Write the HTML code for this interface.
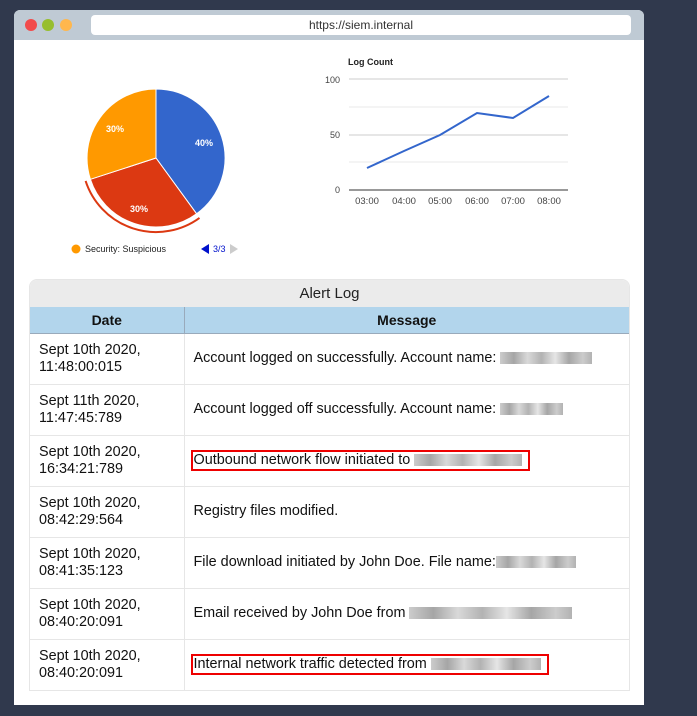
<!DOCTYPE html>
<html><head><meta charset="utf-8"><style>
*{margin:0;padding:0;box-sizing:border-box}
body{width:697px;height:716px;background:#30394d;font-family:"Liberation Sans",sans-serif;position:relative;overflow:hidden}
.win{position:absolute;left:14px;top:10px;width:630px;height:695px;background:#fff;border-radius:6px 6px 0 0;overflow:hidden}
.bar{position:absolute;left:0;top:0;width:630px;height:30px;background:#bfcad4}
.dot{position:absolute;top:9px;width:12px;height:12px;border-radius:50%}
.url{position:absolute;left:77px;top:5px;width:540px;height:20px;background:#fff;border-radius:4px;text-align:center;font-size:12px;line-height:20px;color:#333}
.tbl{position:absolute;left:15px;top:269px;width:601px;border:1px solid #e6e6e6;border-radius:8px 8px 0 0;overflow:hidden}
.ttl{height:27px;background:#ebebeb;text-align:center;font-size:15px;line-height:28px;color:#222}
table{border-collapse:collapse;width:100%;font-size:14.4px;color:#111}
th{background:#b2d5ec;height:26px;font-size:14px;border-bottom:1px solid #9ab;font-weight:bold}
th:first-child{width:154px;border-right:1px solid #9ab}
td{height:51px;border-top:1px solid #e6e6e6;vertical-align:middle;line-height:17px}
td:first-child{padding-left:9px;border-right:1px solid #e6e6e6}
td:last-child{padding-left:9px}
.b{display:inline-block;height:12px;vertical-align:middle;background:linear-gradient(90deg,#bbb,#888 15%,#ccc 30%,#999 45%,#ddd 60%,#888 75%,#bbb 90%,#999);opacity:.75}
.box{display:inline-block;border:2px solid #e00;padding:0 6px 0 1px;margin-left:-3px;line-height:17px}
</style></head><body>
<div class="win">
<div class="bar"><div class="dot" style="left:11px;background:#f24b4b"></div><div class="dot" style="left:28px;background:#97be2e"></div><div class="dot" style="left:46px;background:#ffb74d"></div><div class="url">https://siem.internal</div></div>
<svg style="position:absolute;left:0;top:0" width="630" height="265" viewBox="14 10 630 265">
<path d="M156,158 L156,89 A69,69 0 0 1 196.6,213.8 Z" fill="#3366cc" stroke="#fff" stroke-width="1"/>
<path d="M156,158 L196.6,213.8 A69,69 0 0 1 90.4,179.3 Z" fill="#dc3912" stroke="#fff" stroke-width="1"/>
<path d="M156,158 L90.4,179.3 A69,69 0 0 1 156,89 Z" fill="#ff9900" stroke="#fff" stroke-width="1"/>
<path d="M199.5,217.9 A74,74 0 0 1 85.6,180.9" fill="none" stroke="#dc3912" stroke-width="2"/>
<g font-size="9" fill="#fff" font-weight="bold" text-anchor="middle"><text x="204" y="146">40%</text><text x="139" y="212">30%</text><text x="115" y="132">30%</text></g>
<circle cx="76" cy="249" r="4.5" fill="#ff9900"/>
<text x="85" y="252" font-size="9" fill="#222">Security: Suspicious</text>
<path d="M201,249 L209,244 L209,254 Z" fill="#0011cc"/>
<text x="213" y="252" font-size="9" fill="#0011cc">3/3</text>
<path d="M238,249 L230,244 L230,254 Z" fill="#ccc"/>
<text x="348" y="65" font-size="9" font-weight="bold" fill="#222">Log Count</text>
<g stroke="#e8e8e8"><line x1="349" y1="107" x2="568" y2="107"/><line x1="349" y1="162" x2="568" y2="162"/></g>
<g stroke="#ccc"><line x1="349" y1="79" x2="568" y2="79"/><line x1="349" y1="135" x2="568" y2="135"/></g>
<line x1="349" y1="190" x2="568" y2="190" stroke="#333"/>
<g font-size="9" fill="#444" text-anchor="end"><text x="340" y="83">100</text><text x="340" y="138">50</text><text x="340" y="193">0</text></g>
<g font-size="9.5" fill="#444" text-anchor="middle"><text x="367" y="204">03:00</text><text x="404" y="204">04:00</text><text x="440" y="204">05:00</text><text x="477" y="204">06:00</text><text x="513" y="204">07:00</text><text x="549" y="204">08:00</text></g>
<polyline points="367,168 404,151 440,135 477,113 513,118 549,96" fill="none" stroke="#3366cc" stroke-width="2"/>
</svg>
<div class="tbl"><div class="ttl">Alert Log</div>
<table><tr><th>Date</th><th>Message</th></tr>
<tr><td>Sept 10th 2020,<br>11:48:00:015</td><td>Account logged on successfully. Account name: <span class="b" style="width:92px"></span></td></tr>
<tr><td>Sept 11th 2020,<br>11:47:45:789</td><td>Account logged off successfully. Account name: <span class="b" style="width:63px"></span></td></tr>
<tr><td>Sept 10th 2020,<br>16:34:21:789</td><td><span class="box">Outbound network flow initiated to <span class="b" style="width:108px"></span></span></td></tr>
<tr><td>Sept 10th 2020,<br>08:42:29:564</td><td>Registry files modified.</td></tr>
<tr><td>Sept 10th 2020,<br>08:41:35:123</td><td>File download initiated by John Doe. File name:<span class="b" style="width:80px"></span></td></tr>
<tr><td>Sept 10th 2020,<br>08:40:20:091</td><td>Email received by John Doe from <span class="b" style="width:163px"></span></td></tr>
<tr><td>Sept 10th 2020,<br>08:40:20:091</td><td><span class="box">Internal network traffic detected from <span class="b" style="width:110px"></span></span></td></tr>
</table></div>
</div>
</body></html>
